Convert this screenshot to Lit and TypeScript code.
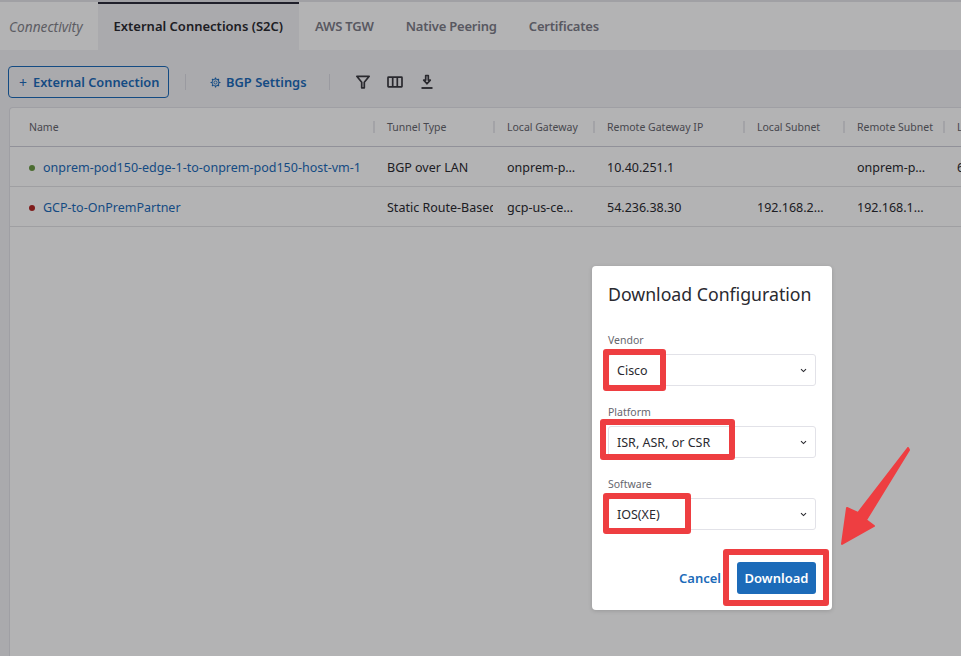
import { LitElement, html, css, svg } from "lit";
import { customElement } from "lit/decorators.js";

const tabs = ["External Connections (S2C)", "AWS TGW", "Native Peering", "Certificates"];

const columns = ["Name", "Tunnel Type", "Local Gateway", "Remote Gateway IP", "Local Subnet", "Remote Subnet", "L"];

const rows = [
  { status: "up", cells: ["onprem-pod150-edge-1-to-onprem-pod150-host-vm-1", "BGP over LAN", "onprem-p…", "10.40.251.1", "", "onprem-p…", "6"] },
  { status: "down", cells: ["GCP-to-OnPremPartner", "Static Route-Based", "gcp-us-ce…", "54.236.38.30", "192.168.2…", "192.168.1…", ""] },
];

const fields = [
  { label: "Vendor", value: "Cisco", mark: "vendor" },
  { label: "Platform", value: "ISR, ASR, or CSR", mark: "platform" },
  { label: "Software", value: "IOS(XE)", mark: "software" },
];

const gear = svg`<svg class="gear" viewBox="0 0 12 12" width="11" height="11" fill="none" stroke="currentColor">
  <circle cx="6" cy="6" r="1.7" stroke-width="1" />
  <circle cx="6" cy="6" r="3.7" stroke-width="1.1" />
  <path d="M6 .6v1.6M6 9.8v1.6M.6 6h1.6M9.8 6h1.6M2.2 2.2l1.1 1.1M8.7 8.7l1.1 1.1M2.2 9.8l1.1-1.1M8.7 3.3l1.1-1.1" stroke-width="1.3" />
</svg>`;

const funnel = svg`<svg viewBox="0 0 16 16" width="16" height="16" fill="none" stroke="currentColor" stroke-width="1.7" stroke-linejoin="round">
  <path d="M1.800 2.300h12.400L9.300 8.300v5.500H6.700V8.300z" />
</svg>`;

const cols = svg`<svg viewBox="0 0 16 16" width="16" height="16" fill="none" stroke="currentColor" stroke-width="1.7">
  <rect x="1" y="3.2" width="14" height="9.600" rx=".5" />
  <path d="M5.700 3.200v9.600M10.300 3.200v9.600" />
</svg>`;

const download = svg`<svg viewBox="0 0 16 16" width="16" height="16" fill="none" stroke="currentColor" stroke-width="1.7">
  <path d="M6.700 1.500h2.600v4.600h2L8 9.800 4.700 6.100h2z" stroke-linejoin="round" />
  <path d="M2.500 14h11" stroke-width="1.9" />
</svg>`;

const chevron = svg`<svg viewBox="0 0 8 6" width="7" height="5" fill="none" stroke="#2a2a30" stroke-width="1.3">
  <path d="M1 1.300l3 3 3-3" />
</svg>`;

@customElement("app-root")
export class AppRoot extends LitElement {
  static styles = css`
    :host {
      display: block;
      position: relative;
      width: 961px;
      height: 656px;
      overflow: hidden;
      background: #f3f2f5;
      font-family: "Noto Sans", "Liberation Sans", sans-serif;
      font-size: 12.5px;
      color: #2a2a30;
    }
    .page {
      display: flex;
      flex-direction: column;
      height: 100%;
    }
    .tabs {
      display: flex;
      height: 48px;
      border-top: 2px solid #e4e4e8;
      background: #fff;
      align-items: stretch;
    }
    .tab {
      display: flex;
      align-items: center;
      padding: 0 16px;
      font-weight: 600;
      font-size: 13px;
      letter-spacing: -0.2px;
      color: #7d7d88;
    }
    .tab.lead {
      padding: 0 15px 0 9px;
      font-weight: 400;
      font-style: italic;
      font-size: 13.7px;
      letter-spacing: 0;
      color: #85858c;
    }
    .tab.active {
      background: #f3f2f5;
      color: #2a2a30;
      border-top: 2px solid #2c2c3a;
      padding-bottom: 2px;
      box-sizing: border-box;
      letter-spacing: 0;
    }
    .toolbar {
      display: flex;
      align-items: center;
      height: 57px;
      padding: 16px 0 9px 8px;
      box-sizing: border-box;
      color: #1c6bb9;
      font-weight: 600;
      font-size: 12.8px;
    }
    .outline {
      display: flex;
      align-items: center;
      gap: 6px;
      box-sizing: border-box;
      width: 161px;
      height: 32px;
      padding: 0 8px 0 10px;
      border: 1px solid #1c6bb9;
      border-radius: 4px;
    }
    .plus {
      font-weight: 400;
      font-size: 14px;
    }
    .sep {
      width: 1px;
      height: 16px;
      background: #dcdce2;
    }
    .sep.first {
      margin-left: 16px;
    }
    .bgp {
      display: flex;
      align-items: center;
      gap: 5px;
      margin: 0 22px 0 24px;
      font-size: 12.9px;
    }
    .icons {
      display: flex;
      gap: 16px;
      margin-left: 25px;
      color: #3a3a40;
    }
    .icons svg {
      display: block;
    }
    .table {
      flex: 1;
      margin-left: 9px;
      background: #fff;
      border-top: 1px solid #e2e2e8;
      border-left: 1px solid #e2e2e8;
      border-top-left-radius: 4px;
    }
    .row {
      display: grid;
      grid-template-columns: 363px 120px 100px 150px 100px 100px 1fr;
      align-items: center;
      height: 40px;
      box-sizing: border-box;
      border-bottom: 1px solid #e2e2e6;
    }
    .row.head {
      height: 39px;
      border-bottom: 1px solid #cfcfd8;
      color: #66666e;
      font-size: 10.5px;
    }
    .cell {
      padding: 2px 5px 0 14px;
      white-space: nowrap;
      overflow: hidden;
    }
    .head .cell {
      padding-top: 0;
      line-height: 16px;
    }
    .head .cell:not(:first-child) {
      background: linear-gradient(#e8e8ec, #e8e8ec) left center / 2px 12px no-repeat;
    }
    .cell:first-child {
      padding-left: 19px;
      padding-right: 0;
    }
    .name {
      display: flex;
      align-items: center;
      gap: 8px;
      color: #1c6bb9;
    }
    .dot {
      width: 6px;
      height: 6px;
      border-radius: 50%;
      flex: none;
    }
    .dot.up {
      background: #6b9a44;
    }
    .dot.down {
      background: #b52825;
    }
    .overlay {
      position: absolute;
      inset: 0;
      background: rgba(2, 2, 8, 0.3);
    }
    .modal {
      position: absolute;
      left: 592px;
      top: 266px;
      width: 240px;
      height: 344px;
      box-sizing: border-box;
      padding: 16px;
      display: flex;
      flex-direction: column;
      background: #fff;
      border-radius: 4px;
      box-shadow: 0 1px 4px rgba(0, 0, 0, 0.15);
    }
    h2 {
      margin: 0 0 26px;
      font-weight: 400;
      font-size: 17.7px;
      line-height: 25px;
      color: #2a2a30;
      white-space: nowrap;
    }
    .field {
      display: flex;
      flex-direction: column;
      margin-bottom: 19px;
    }
    .field label {
      font-size: 10.5px;
      line-height: 14px;
      color: #66666e;
      margin-bottom: 7px;
    }
    .select {
      display: flex;
      align-items: center;
      justify-content: space-between;
      box-sizing: border-box;
      height: 32px;
      padding: 0 8px;
      border: 1px solid #e2e2e8;
      border-radius: 3px;
      font-size: 12.5px;
    }
    .actions {
      display: flex;
      justify-content: flex-end;
      align-items: center;
      gap: 16px;
      margin-top: 13px;
      font-weight: 600;
      font-size: 13px;
    }
    .cancel {
      color: #1c6bb9;
    }
    .primary {
      display: flex;
      align-items: center;
      justify-content: center;
      width: 79px;
      height: 32px;
      border-radius: 3px;
      background: #1c6bb9;
      color: #fff;
    }
    .mark {
      position: absolute;
      box-sizing: border-box;
      border: 6.5px solid #ee3e41;
      border-radius: 3px;
    }
    .mark.vendor {
      left: 603px;
      top: 349px;
      width: 63px;
      height: 42px;
    }
    .mark.platform {
      left: 600px;
      top: 419px;
      width: 135px;
      height: 41px;
    }
    .mark.software {
      left: 603px;
      top: 493px;
      width: 88px;
      height: 41px;
    }
    .mark.action {
      left: 723px;
      top: 549px;
      width: 106px;
      height: 57px;
    }
    .arrow {
      position: absolute;
      left: 830px;
      top: 436px;
    }
  `;

  render() {
    return html`
      <div class="page">
        <div class="tabs">
          <div class="tab lead">Connectivity</div>
          ${tabs.map(
            (t, i) => html`<div class="tab ${i === 0 ? "active" : ""}">${t}</div>`
          )}
        </div>
        <div class="toolbar">
          <div class="outline"><span class="plus">+</span>External Connection</div>
          <div class="sep first"></div>
          <div class="bgp">${gear}BGP Settings</div>
          <div class="sep"></div>
          <div class="icons">${funnel}${cols}${download}</div>
        </div>
        <div class="table">
          <div class="row head">
            ${columns.map((c) => html`<div class="cell">${c}</div>`)}
          </div>
          ${rows.map(
            (r) => html`<div class="row">
              <div class="cell name">
                <span class="dot ${r.status}"></span>${r.cells[0]}
              </div>
              ${r.cells.slice(1).map((c) => html`<div class="cell">${c}</div>`)}
            </div>`
          )}
        </div>
      </div>
      <div class="overlay"></div>
      <div class="modal">
        <h2>Download Configuration</h2>
        ${fields.map(
          (f) => html`<div class="field">
            <label>${f.label}</label>
            <div class="select"><span>${f.value}</span>${chevron}</div>
          </div>`
        )}
        <div class="actions">
          <span class="cancel">Cancel</span>
          <span class="primary">Download</span>
        </div>
      </div>
      ${fields.map((f) => html`<div class="mark ${f.mark}"></div>`)}
      <div class="mark action"></div>
      <svg class="arrow" width="90" height="120" viewBox="830 436 90 120">
        <path
          d="M908 448L858 513L847 508L842 544L874 526L866 520L909 450Z"
          fill="#ee3e41"
          stroke="#ee3e41"
          stroke-width="2"
          stroke-linejoin="round"
        />
      </svg>
    `;
  }
}
